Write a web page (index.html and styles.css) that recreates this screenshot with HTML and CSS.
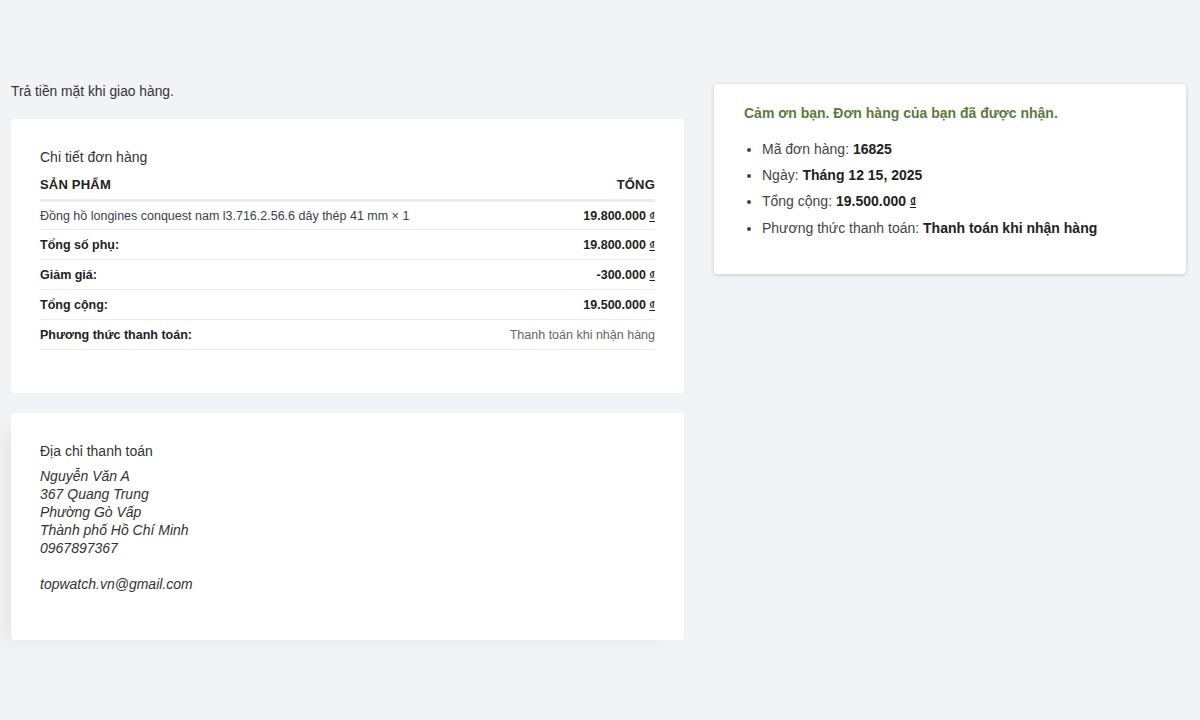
FILE: index.html
```html
<!DOCTYPE html>
<html lang="vi">
<head>
<meta charset="utf-8">
<title>Đơn hàng</title>
<link rel="stylesheet" href="styles.css">
</head>
<body>
<div class="page">
  <div class="main">
    <p class="note">Trả tiền mặt khi giao hàng.</p>
    <section class="card order">
      <h2 class="card-title">Chi tiết đơn hàng</h2>
      <table class="order-table">
        <thead>
          <tr><th class="left">Sản phẩm</th><th class="right">Tổng</th></tr>
        </thead>
        <tbody>
          <tr class="item"><td class="left">Đồng hồ longines conquest nam l3.716.2.56.6 dây thép 41 mm × 1</td><td class="right strong">19.800.000 <span class="cur">₫</span></td></tr>
        </tbody>
        <tfoot>
          <tr><th class="left">Tổng số phụ:</th><td class="right strong">19.800.000 <span class="cur">₫</span></td></tr>
          <tr><th class="left">Giảm giá:</th><td class="right strong">-300.000 <span class="cur">₫</span></td></tr>
          <tr><th class="left">Tổng cộng:</th><td class="right strong">19.500.000 <span class="cur">₫</span></td></tr>
          <tr><th class="left">Phương thức thanh toán:</th><td class="right muted">Thanh toán khi nhận hàng</td></tr>
        </tfoot>
      </table>
    </section>
    <section class="card address">
      <h2 class="card-title">Địa chỉ thanh toán</h2>
      <address class="addr">Nguyễn Văn A<br>367 Quang Trung<br>Phường Gò Vấp<br>Thành phố Hồ Chí Minh<br>0967897367<br><br>topwatch.vn@gmail.com</address>
    </section>
  </div>
  <aside class="card summary">
    <p class="thanks">Cảm ơn bạn. Đơn hàng của bạn đã được nhận.</p>
    <ul class="overview">
      <li>Mã đơn hàng: <strong>16825</strong></li>
      <li>Ngày: <strong>Tháng 12 15, 2025</strong></li>
      <li>Tổng cộng: <strong>19.500.000 <span class="cur">₫</span></strong></li>
      <li>Phương thức thanh toán: <strong>Thanh toán khi nhận hàng</strong></li>
    </ul>
  </aside>
</div>
</body>
</html>
```
FILE: styles.css
```css
* { box-sizing: border-box; }
html, body { margin: 0; padding: 0; }
body {
  background: #f2f3f7;
  font-family: "Liberation Sans", Arial, sans-serif;
  color: #333;
  height: 720px;
  overflow: hidden;
}
.page {
  display: flex;
  align-items: flex-start;
  gap: 30px;
  padding: 84px 14px 0 11px;
}
.main {
  width: 673px;
  flex: none;
  display: flex;
  flex-direction: column;
}
.note {
  margin: 0 0 19px;
  font-size: 13.8px;
  line-height: 16px;
  color: #333;
}
.card {
  background: #fff;
  border-radius: 4px;
}
.order {
  padding: 30px 29px 43px;
  margin-bottom: 20px;
}
.address {
  padding: 30px 29px 47px;
  box-shadow: -14px 8px 16px -8px rgba(0,0,0,0.06);
}
.card-title {
  margin: 0;
  font-size: 14px;
  font-weight: normal;
  line-height: 16px;
  color: #333;
}
.order-table {
  width: 100%;
  border-collapse: collapse;
  margin-top: 8px;
  font-size: 12.5px;
}
.order-table thead th {
  font-size: 13px;
  font-weight: bold;
  text-transform: uppercase;
  color: #222;
  padding: 4px 0 7px;
  border-bottom: 3px solid #ececec;
  letter-spacing: 0.2px;
}
.order-table td,
.order-table tfoot th {
  height: 30px;
  padding: 0;
  border-bottom: 1px solid #ebebeb;
  vertical-align: middle;
}
.order-table .item td { height: 29px; }
.left { text-align: left; }
.right { text-align: right; }
.order-table tfoot th {
  font-weight: bold;
  color: #222;
}
.item .left { color: #3b4150; }
.strong { font-weight: bold; color: #222; }
.muted { color: #666; }
.cur { text-decoration: underline; font-size: 11px; }
.addr {
  margin-top: 8px;
  font-style: italic;
  font-size: 14px;
  line-height: 18px;
  color: #333;
}
.summary {
  width: 472px;
  flex: none;
  padding: 20px 30px 28px;
  box-shadow: 0 1px 4px rgba(0,0,0,0.18);
}
.thanks {
  margin: 0;
  color: #5b7b3c;
  font-weight: bold;
  font-size: 14px;
  line-height: 18px;
}
.overview {
  margin: 19px 0 0;
  padding-left: 18px;
  font-size: 14px;
  line-height: 16px;
  color: #444;
}
.overview li { margin-bottom: 10px; }
.overview strong { color: #222; }
.overview .cur { font-size: 12px; }
```
